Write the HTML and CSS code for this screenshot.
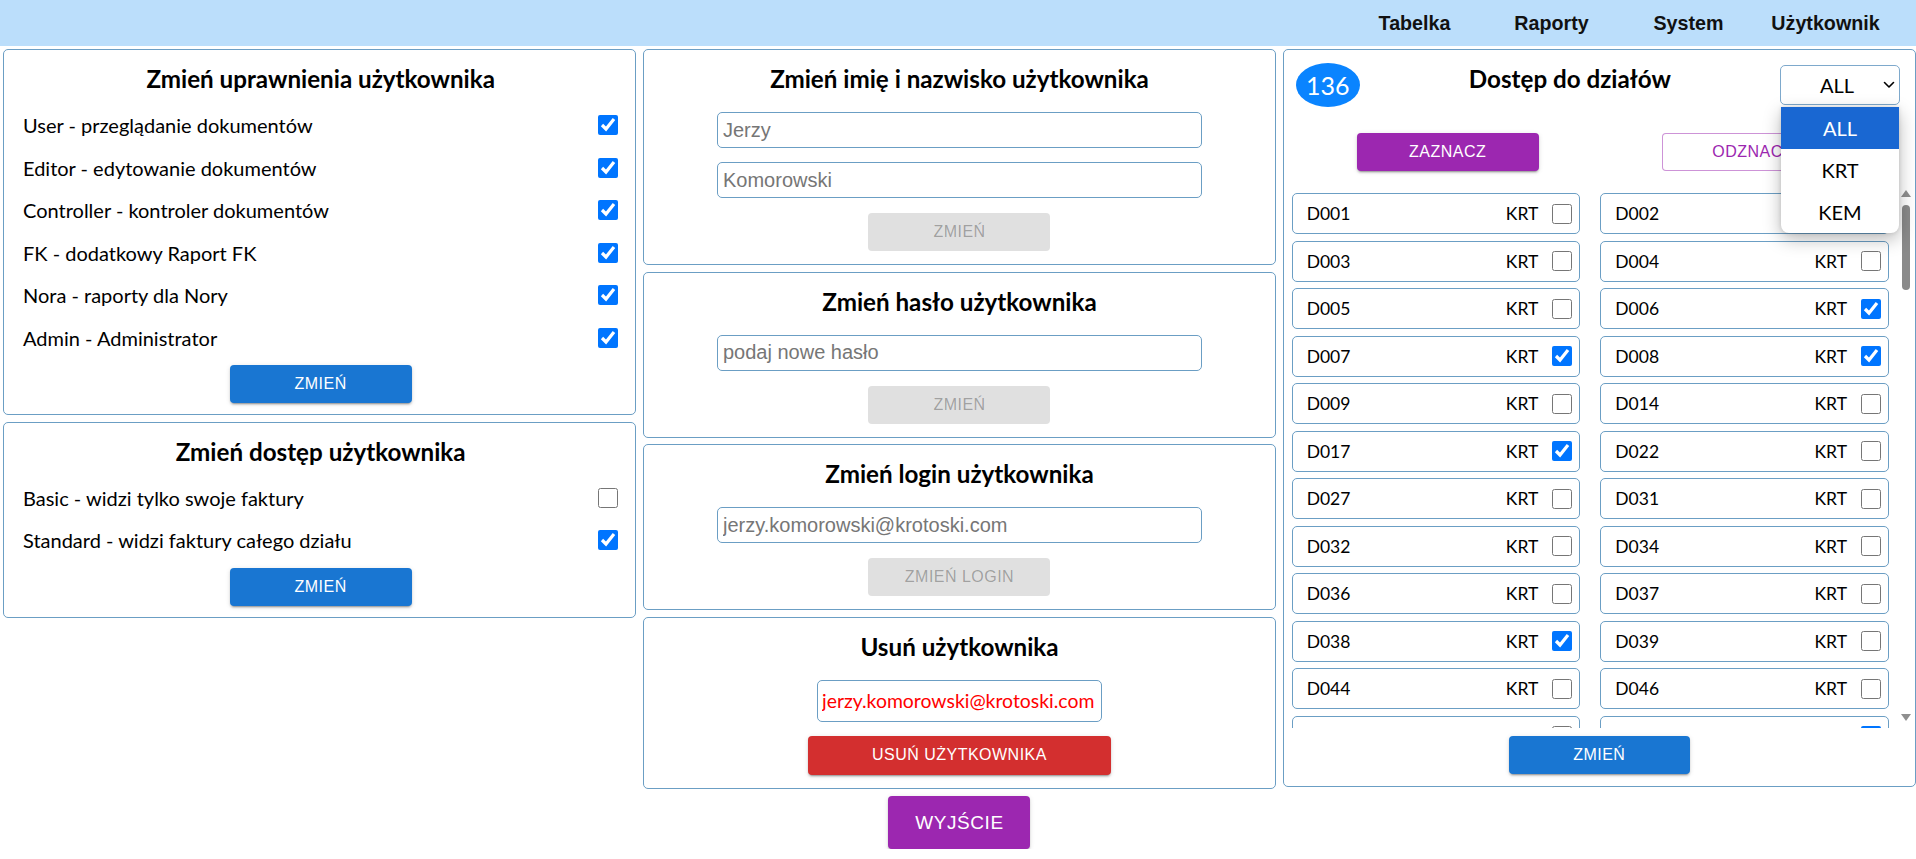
FILE: index.html
```html
<!DOCTYPE html>
<html lang="pl">
<head>
<meta charset="utf-8">
<title>Użytkownik</title>
<link rel="stylesheet" href="styles.css">
</head>
<body>
<header class="topbar">
  <nav class="nav">
    <a class="nav-item">Tabelka</a>
    <a class="nav-item">Raporty</a>
    <a class="nav-item">System</a>
    <a class="nav-item">Użytkownik</a>
  </nav>
</header>
<main class="layout">
  <section class="col">
    <div class="panel panel-opts">
      <h2 class="panel-title">Zmień uprawnienia użytkownika</h2>
      <div class="opt-list">
        <label class="opt-row"><span>User - przeglądanie dokumentów</span><input class="chk" type="checkbox" checked></label>
        <label class="opt-row"><span>Editor - edytowanie dokumentów</span><input class="chk" type="checkbox" checked></label>
        <label class="opt-row"><span>Controller - kontroler dokumentów</span><input class="chk" type="checkbox" checked></label>
        <label class="opt-row"><span>FK - dodatkowy Raport FK</span><input class="chk" type="checkbox" checked></label>
        <label class="opt-row"><span>Nora - raporty dla Nory</span><input class="chk" type="checkbox" checked></label>
        <label class="opt-row"><span>Admin - Administrator</span><input class="chk" type="checkbox" checked></label>
      </div>
      <div class="btn-row"><button class="btn btn-blue">Zmień</button></div>
    </div>
    <div class="panel panel-opts">
      <h2 class="panel-title">Zmień dostęp użytkownika</h2>
      <div class="opt-list">
        <label class="opt-row"><span>Basic - widzi tylko swoje faktury</span><input class="chk" type="checkbox"></label>
        <label class="opt-row"><span>Standard - widzi faktury całego działu</span><input class="chk" type="checkbox" checked></label>
      </div>
      <div class="btn-row"><button class="btn btn-blue">Zmień</button></div>
    </div>
  </section>

  <section class="col">
    <div class="panel panel-form">
      <h2 class="panel-title">Zmień imię i nazwisko użytkownika</h2>
      <input class="field" type="text" value="Jerzy">
      <input class="field field-gap" type="text" value="Komorowski">
      <div class="btn-row btn-row-form"><button class="btn btn-disabled" disabled>Zmień</button></div>
    </div>
    <div class="panel panel-form">
      <h2 class="panel-title">Zmień hasło użytkownika</h2>
      <input class="field" type="text" value="podaj nowe hasło">
      <div class="btn-row btn-row-form"><button class="btn btn-disabled" disabled>Zmień</button></div>
    </div>
    <div class="panel panel-form">
      <h2 class="panel-title">Zmień login użytkownika</h2>
      <input class="field" type="text" value="jerzy.komorowski@krotoski.com">
      <div class="btn-row btn-row-form"><button class="btn btn-disabled" disabled>Zmień login</button></div>
    </div>
    <div class="panel panel-form panel-delete">
      <h2 class="panel-title">Usuń użytkownika</h2>
      <input class="field field-red" type="text" value="jerzy.komorowski@krotoski.com">
      <div class="btn-row btn-row-del"><button class="btn btn-red">Usuń użytkownika</button></div>
    </div>
    <button class="btn btn-exit">Wyjście</button>
  </section>

  <section class="col">
    <div class="panel panel-depts">
      <div class="dept-head">
        <div class="badge">136</div>
        <h2 class="dept-title">Dostęp do działów</h2>
        <div class="select-wrap">
          <div class="select"><span class="select-value">ALL</span><svg class="chevron" width="12" height="8" viewBox="0 0 12 8"><polyline points="1.5,1.5 6,6 10.5,1.5" fill="none" stroke="#000" stroke-width="1.6" stroke-linecap="round" stroke-linejoin="round"/></svg></div>
          <ul class="dropdown">
            <li class="dd-opt dd-active">ALL</li>
            <li class="dd-opt">KRT</li>
            <li class="dd-opt">KEM</li>
          </ul>
        </div>
      </div>
      <div class="sel-buttons">
        <button class="btn btn-purple">Zaznacz</button>
        <button class="btn btn-outline">Odznacz</button>
      </div>
      <div class="dept-box">
        <div class="dept-scroll">
          <div class="dept-grid">
            <div class="card"><span class="code">D001</span><span class="co">KRT</span><input class="chk" type="checkbox"></div>
            <div class="card"><span class="code">D002</span><span class="co">KRT</span><input class="chk" type="checkbox"></div>
            <div class="card"><span class="code">D003</span><span class="co">KRT</span><input class="chk" type="checkbox"></div>
            <div class="card"><span class="code">D004</span><span class="co">KRT</span><input class="chk" type="checkbox"></div>
            <div class="card"><span class="code">D005</span><span class="co">KRT</span><input class="chk" type="checkbox"></div>
            <div class="card"><span class="code">D006</span><span class="co">KRT</span><input class="chk" type="checkbox" checked></div>
            <div class="card"><span class="code">D007</span><span class="co">KRT</span><input class="chk" type="checkbox" checked></div>
            <div class="card"><span class="code">D008</span><span class="co">KRT</span><input class="chk" type="checkbox" checked></div>
            <div class="card"><span class="code">D009</span><span class="co">KRT</span><input class="chk" type="checkbox"></div>
            <div class="card"><span class="code">D014</span><span class="co">KRT</span><input class="chk" type="checkbox"></div>
            <div class="card"><span class="code">D017</span><span class="co">KRT</span><input class="chk" type="checkbox" checked></div>
            <div class="card"><span class="code">D022</span><span class="co">KRT</span><input class="chk" type="checkbox"></div>
            <div class="card"><span class="code">D027</span><span class="co">KRT</span><input class="chk" type="checkbox"></div>
            <div class="card"><span class="code">D031</span><span class="co">KRT</span><input class="chk" type="checkbox"></div>
            <div class="card"><span class="code">D032</span><span class="co">KRT</span><input class="chk" type="checkbox"></div>
            <div class="card"><span class="code">D034</span><span class="co">KRT</span><input class="chk" type="checkbox"></div>
            <div class="card"><span class="code">D036</span><span class="co">KRT</span><input class="chk" type="checkbox"></div>
            <div class="card"><span class="code">D037</span><span class="co">KRT</span><input class="chk" type="checkbox"></div>
            <div class="card"><span class="code">D038</span><span class="co">KRT</span><input class="chk" type="checkbox" checked></div>
            <div class="card"><span class="code">D039</span><span class="co">KRT</span><input class="chk" type="checkbox"></div>
            <div class="card"><span class="code">D044</span><span class="co">KRT</span><input class="chk" type="checkbox"></div>
            <div class="card"><span class="code">D046</span><span class="co">KRT</span><input class="chk" type="checkbox"></div>
            <div class="card"><span class="code">D047</span><span class="co">KRT</span><input class="chk" type="checkbox"></div>
            <div class="card"><span class="code">D048</span><span class="co">KRT</span><input class="chk" type="checkbox" checked></div>
          </div>
        </div>
        <div class="vscroll">
          <span class="vs-up"></span>
          <div class="vs-track"><span class="vs-thumb"></span></div>
          <span class="vs-down"></span>
        </div>
      </div>
      <div class="btn-row btn-row-depts"><button class="btn btn-blue">Zmień</button></div>
    </div>
  </section>
</main>
</body>
</html>
```

FILE: styles.css
```css
* { box-sizing: border-box; }

html, body { margin: 0; padding: 0; }

body {
  font-family: Lato, "Noto Sans", sans-serif;
  color: #000;
  background: #fff;
  overflow: hidden;
}

/* ---------- top bar ---------- */
.topbar {
  height: 46px;
  background: #bbdefb;
  display: flex;
  justify-content: flex-end;
  padding-right: 22px;
}
.nav { display: flex; }
.nav-item {
  width: 137px;
  text-align: center;
  line-height: 46px;
  font-family: "Liberation Sans", Arial, sans-serif;
  font-weight: 700;
  font-size: 19.7px;
  color: #111;
  text-decoration: none;
}

/* ---------- layout ---------- */
.layout {
  display: flex;
  align-items: flex-start;
  gap: 6.5px;
  padding: 3px 0 0 3px;
}
.col {
  flex: 1 1 0;
  min-width: 0;
  display: flex;
  flex-direction: column;
  gap: 6.5px;
}

.panel {
  border: 1px solid #6b9ec4;
  border-radius: 5px;
  background: #fff;
}
.panel-title {
  margin: 0;
  height: 42px;
  line-height: 42px;
  text-align: center;
  font-size: 24.2px;
  font-weight: 700;
  white-space: nowrap;
}

/* ---------- option panels ---------- */
.panel-opts { padding: 8px 17px 11px 19px; }
.opt-list { margin-top: 4px; }
.opt-row {
  display: flex;
  align-items: center;
  justify-content: space-between;
  height: 42.5px;
  font-size: 20px;
}
.chk {
  width: 20px;
  height: 20px;
  margin: 0;
  flex: none;
}
.btn-row {
  display: flex;
  justify-content: center;
  margin-top: 6px;
}

/* ---------- buttons ---------- */
.btn {
  font-family: "Liberation Sans", Arial, sans-serif;
  font-size: 16px;
  letter-spacing: 0.03em;
  text-transform: uppercase;
  border: 0;
  border-radius: 4px;
  height: 38px;
  width: 182px;
  padding: 0;
  color: #fff;
  cursor: pointer;
  box-shadow: 0 3px 1px -2px rgba(0,0,0,.2), 0 2px 2px 0 rgba(0,0,0,.14), 0 1px 5px 0 rgba(0,0,0,.12);
}
.btn-blue { background: #1976d2; }
.btn-purple { background: #9c27b0; }
.btn-red { background: #d32f2f; width: 303px; height: 39px; }
.btn-disabled {
  background: #e0e0e0;
  color: rgba(0,0,0,.3);
  box-shadow: none;
  cursor: default;
}
.btn-outline {
  background: #fff;
  color: #9c27b0;
  border: 1px solid rgba(156,39,176,.5);
  box-shadow: none;
}
.btn-exit {
  align-self: center;
  margin-top: 1px;
  width: 142px;
  height: 53px;
  font-size: 19px;
  background: #9c27b0;
}

/* ---------- form panels ---------- */
.panel-form {
  padding: 8px 0 13px;
  display: flex;
  flex-direction: column;
  align-items: center;
}
.field {
  margin-top: 12px;
  width: 485px;
  height: 36px;
  border: 1px solid #6b9ec4;
  border-radius: 5px;
  padding: 0 5px;
  font-family: "Liberation Sans", Arial, sans-serif;
  font-size: 20px;
  color: #767676;
  background: #fff;
  outline: none;
}
.field-gap { margin-top: 14px; }
.btn-row-form { margin-top: 15px; }
.field-red {
  width: 285px;
  height: 42px;
  padding: 0 4px;
  font-family: Lato, "Noto Sans", sans-serif;
  font-size: 19.4px;
  color: #f00;
}
.btn-row-del { margin-top: 14px; }

/* ---------- departments panel ---------- */
.panel-depts {
  position: relative;
  padding: 0 0 12px 0;
}
.dept-head {
  display: flex;
  align-items: flex-start;
  justify-content: space-between;
  margin: 13px 15px 0 12px;
  height: 44px;
}
.badge {
  width: 64px;
  height: 44px;
  border-radius: 50%;
  background: #0a84ff;
  color: #fff;
  font-size: 25px;
  display: flex;
  align-items: center;
  justify-content: center;
}
.dept-title {
  margin: 0;
  line-height: 32px;
  font-size: 24.2px;
  font-weight: 700;
}
.select-wrap {
  position: relative;
  margin-top: 2px;
}
.select {
  width: 120px;
  height: 40px;
  border: 1px solid #7ea9cc;
  border-radius: 5px;
  display: flex;
  align-items: center;
  padding: 0 4px 0 10px;
  font-size: 20px;
}
.select-value { flex: 1; text-align: center; }
.chevron { flex: none; }
.dropdown {
  position: absolute;
  top: 42px;
  left: 1px;
  width: 118px;
  margin: 0;
  padding: 0;
  list-style: none;
  background: #fff;
  border-radius: 0 0 8px 8px;
  box-shadow: 0 6px 18px rgba(0,0,0,.28), 0 0 4px rgba(0,0,0,.12);
  overflow: hidden;
  z-index: 5;
}
.dd-opt {
  height: 42px;
  line-height: 42px;
  text-align: center;
  font-size: 20px;
}
.dd-active { background: #1967d2; color: #fff; }

.sel-buttons {
  display: flex;
  gap: 123px;
  margin-top: 26px;
  padding-left: 73px;
}

.dept-box {
  display: flex;
  margin: 16px 1px 0 8px;
  height: 541px;
}
.dept-scroll {
  flex: 1 1 0;
  min-width: 0;
  overflow: hidden;
  padding: 6px 10px 0 0;
}
.dept-grid {
  display: grid;
  grid-template-columns: 1fr 1fr;
  column-gap: 20px;
  row-gap: 6.5px;
}
.card {
  height: 41px;
  border: 1px solid #6b9ec4;
  border-radius: 5px;
  display: flex;
  align-items: center;
  padding: 0 7px 0 14px;
  font-size: 17.5px;
}
.code { flex: 1; }
.co { margin-right: 14px; }

.vscroll {
  width: 15px;
  flex: none;
  display: flex;
  flex-direction: column;
  align-items: center;
  padding: 3px 0 7px;
}
.vs-up {
  width: 0;
  height: 0;
  border-left: 5px solid transparent;
  border-right: 5px solid transparent;
  border-bottom: 7px solid #8f8f8f;
}
.vs-down {
  width: 0;
  height: 0;
  border-left: 5px solid transparent;
  border-right: 5px solid transparent;
  border-top: 7px solid #8f8f8f;
}
.vs-track {
  flex: 1;
  width: 100%;
  display: flex;
  justify-content: center;
  padding-top: 8px;
}
.vs-thumb {
  width: 8px;
  height: 85px;
  border-radius: 4px;
  background: #8a8a8a;
}

.btn-row-depts { margin-top: 8px; }
.btn-row-depts .btn { width: 181px; }
```
